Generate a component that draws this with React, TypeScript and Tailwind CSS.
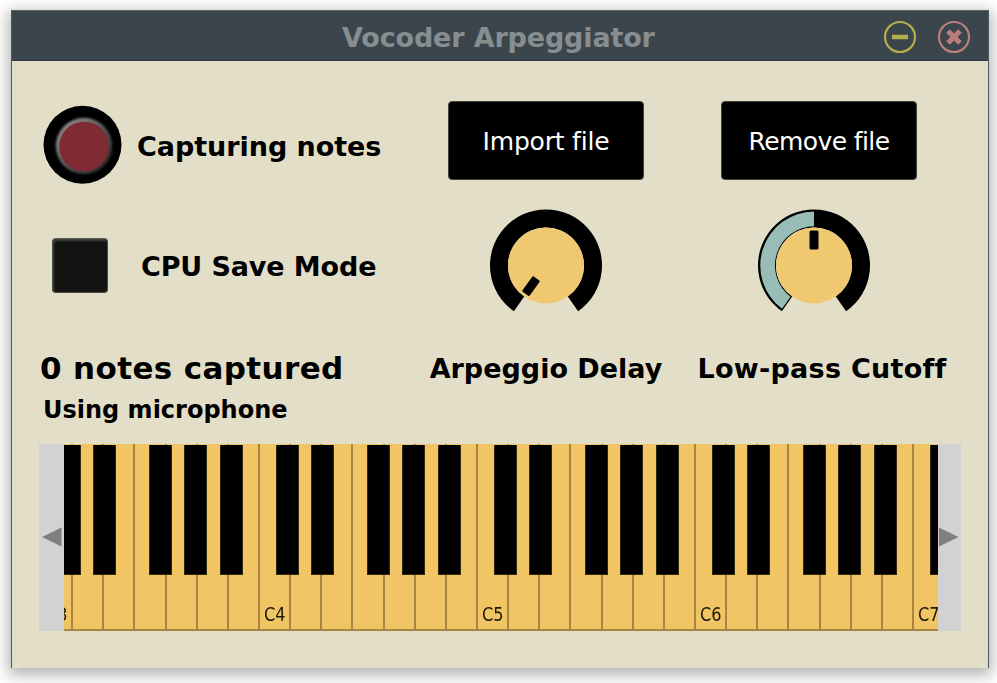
const OCTAVE = 218;
const WHITE_KEYS = Array.from({ length: 30 }, (_, i) => i);
const BLACK_KEYS = [0, 1, 2, 3, 4].flatMap((octave) =>
  [17, 52.4, 108, 143.6, 179].map((offset) => octave * OCTAVE + offset),
);

function Label({ text, className }: { text: string; className: string }) {
  return <div className={`font-bold whitespace-nowrap leading-[36px] ${className}`}>{text}</div>;
}

function FileButton({ text, className }: { text: string; className: string }) {
  return (
    <button
      className={`mt-[39.5px] flex h-[79px] w-[196px] items-center justify-center rounded-[4px] border border-[#47443a] bg-black pt-[3px] text-[25px] leading-[36px] whitespace-nowrap text-white ${className}`}
    >
      {text}
    </button>
  );
}

function Knob({ half }: { half?: boolean }) {
  return (
    <svg width="116" height="112" viewBox="-58 -58.5 116 112" className="mt-[27px] block">
      <path
        d="M-32.1 45.8 A56 56 0 1 1 32.1 45.8 L21.8 31.1 A38 38 0 1 0 -21.8 31.1 Z"
        fill="#000"
      />
      {half && (
        <path
          d="M0 -54 A54 54 0 0 0 -32 43.3 L-23.5 31.3 A39.3 39.3 0 0 1 0 -39.3 Z"
          fill="#98bdb7"
        />
      )}
      <circle r="38" fill="#efc870" />
      <rect
        x="-4.5"
        y="-35"
        width="9"
        height="19"
        rx="1.5"
        fill="#000"
        transform={half ? undefined : "rotate(216)"}
      />
    </svg>
  );
}

function Keyboard() {
  return (
    <div className="mx-[27px] flex h-[187px] bg-[#d2d2d2]">
      <div className="flex w-[25px] shrink-0 items-center">
        <svg width="25" height="20" className="block">
          <path d="M3 10 L22.5 0.5 V19.5 Z" fill="#7f7f7f" />
        </svg>
      </div>
      <div className="relative w-[873.5px] shrink-0 overflow-hidden bg-[#f1c563]">
        <div className="ml-[-24px] flex h-full">
          {WHITE_KEYS.map((key) => (
            <div
              key={key}
              className="flex h-full w-[31.143px] shrink-0 items-end justify-center border-b-2 border-l-2 border-[#a78645] pb-[4px] text-[19px] leading-[22px] text-[#1d180c]"
            >
              {key % 7 === 0 && <span className="scale-x-[0.85]">C{3 + key / 7}</span>}
            </div>
          ))}
        </div>
        {BLACK_KEYS.map((left) => (
          <div
            key={left}
            className="absolute top-px h-[130px] w-[23px] border border-t-0 border-[#32290f] bg-black"
            style={{ left: left - 23.4 }}
          />
        ))}
      </div>
      <div className="flex w-[23px] shrink-0 items-center">
        <svg width="23" height="20" className="block">
          <path d="M1 0.5 L20.5 10 L1 19.5 Z" fill="#7f7f7f" />
        </svg>
      </div>
    </div>
  );
}

export default function App() {
  return (
    <div className="h-[683px] w-[997px] overflow-hidden bg-white pt-[10px] pl-[11px] font-['DejaVu_Sans',sans-serif] text-black">
      <div className="h-[658px] w-[978px] border-x border-[#4a585d] bg-[#e3dec8] shadow-[0_4px_14px_3px_rgba(0,0,0,0.3)]">
        <header className="flex h-[51px] items-center border-y border-t-[#59676b] border-b-[#2d3a43] bg-[#3a464c]">
          <div className="w-[330px]" />
          <div className="flex-1 pt-[5px] text-[27px] leading-[36px] font-bold tracking-[-0.15px] whitespace-nowrap text-[#878e90]">
            Vocoder Arpeggiator
          </div>
          <svg width="34" height="34" viewBox="-17 -17 34 34" className="mt-[3px] mr-[20.5px]">
            <circle r="15" fill="none" stroke="#b5ae4f" strokeWidth="2.2" />
            <path d="M-8 0 H8" stroke="#b5ae4f" strokeWidth="4.5" />
          </svg>
          <svg width="34" height="34" viewBox="-17 -17 34 34" className="mt-[3px] mr-[17px]">
            <circle r="15" fill="none" stroke="#b97e79" strokeWidth="2.2" />
            <path d="M-6 -6 L6 6 M6 -6 L-6 6" stroke="#b97e79" strokeWidth="5" />
          </svg>
        </header>

        <main className="flex h-[382.5px]">
          <section className="w-[416px] pl-[28px]">
            <div className="flex h-[144px] items-start">
              <svg width="80" height="80" viewBox="0 0 80 80" className="mt-[44px] ml-[3px]">
                <defs>
                  <linearGradient id="bevel" x1="0.1" y1="0.1" x2="0.9" y2="0.9">
                    <stop offset="0" stopColor="#8d8b8b" />
                    <stop offset="0.5" stopColor="#5a5757" />
                    <stop offset="1" stopColor="#2a2828" />
                  </linearGradient>
                </defs>
                <circle cx="39.5" cy="39.7" r="39" fill="#000" />
                <circle cx="41" cy="41" r="28.2" fill="url(#bevel)" className="blur-[0.8px]" />
                <circle cx="41" cy="41.5" r="24.8" fill="#802a33" />
              </svg>
              <Label text="Capturing notes" className="mt-[68px] ml-[14px] text-[27px] tracking-[-0.05px]" />
            </div>
            <div className="flex h-[145px] items-start">
              <div className="mt-[33px] ml-[12px] h-[55px] w-[56px] rounded-[4px] border border-[#494a45] border-t-[#5b5d57] bg-[#121310] shadow-[inset_1px_2px_2px_#3f423d]" />
              <Label text="CPU Save Mode" className="mt-[44px] ml-[33px] text-[27px] tracking-[-0.12px]" />
            </div>
            <Label text="0 notes captured" className="text-[31px] tracking-[0.37px]" />
            <Label text="Using microphone" className="mt-[6px] ml-[3px] text-[24px]" />
          </section>

          <section className="flex w-[236px] flex-col items-center">
            <div className="h-[119px] w-[196px]">
              <FileButton text="Import file" className="tracking-[-0.2px]" />
            </div>
            <div className="h-[171px]">
              <Knob />
            </div>
            <Label text="Arpeggio Delay" className="text-[27px]" />
          </section>

          <section className="ml-[18px] flex w-[280px] flex-col items-center">
            <div className="mr-[4px] h-[119px] w-[198px]">
              <FileButton text="Remove file" className="tracking-[-0.6px]" />
            </div>
            <div className="mr-[15.5px] h-[171px]">
              <Knob half />
            </div>
            <Label text="Low-pass Cutoff" className="text-[27px] tracking-[0.27px]" />
          </section>
        </main>

        <Keyboard />
      </div>
    </div>
  );
}
